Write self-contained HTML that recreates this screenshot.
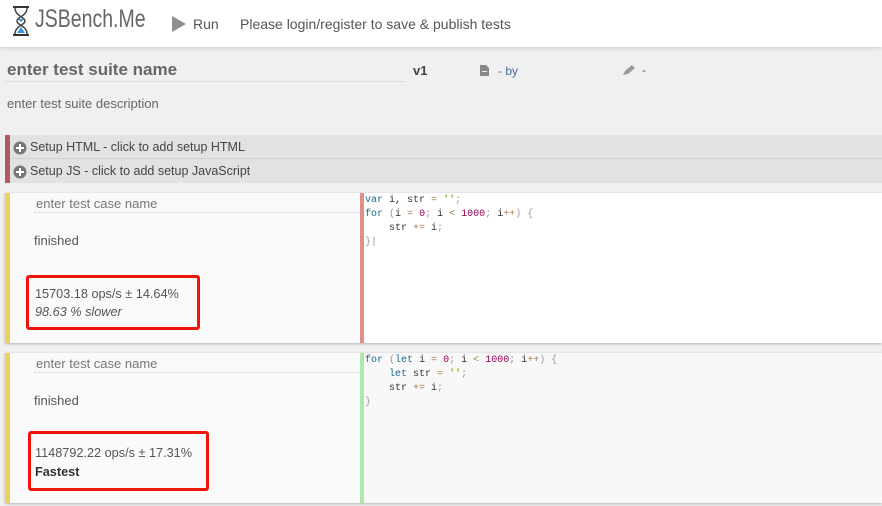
<!DOCTYPE html>
<html><head><meta charset="utf-8"><style>
body{margin:0;width:882px;height:506px;overflow:hidden;background:#f0f0f0;font-family:"Liberation Sans",sans-serif;color:#555;position:relative}
.a{position:absolute}
.hdr{left:0;top:0;width:882px;height:47px;background:#fff;box-shadow:0 1px 4px rgba(0,0,0,.15)}
.code{font-family:"Liberation Mono",monospace;font-size:10px;line-height:14px;white-space:pre;color:#333}
.k{color:#1a6b8f}.n{color:#990055}.o{color:#a67f59}.s{color:#690}.p{color:#999}
.card{left:5px;width:877px;height:150px;background:#fafafa;box-shadow:0 1px 3px rgba(0,0,0,.25)}
.red{border:3px solid #f0150a;border-radius:3px;box-sizing:border-box}
</style></head><body>
<div class="a hdr">
<svg class="a" style="left:10px;top:5px" width="22" height="32" viewBox="0 0 22 32"><path d="M3 2h16M3 30h16" stroke="#333" stroke-width="2"/><path d="M5 3c0 8 10 9 10 13s-10 5-10 13M17 3c0 8-10 9-10 13s10 5 10 13" stroke="#444" fill="none" stroke-width="1.5"/><path d="M8 14l3 3 3-3zM7 28l4-6 4 6z" fill="#3b8fd6"/></svg>
<div class="a" style="left:35px;top:5px;font-size:25px;color:#666;transform:scaleX(.78);transform-origin:0 0">JSBench.Me</div>
<svg class="a" style="left:172px;top:16px" width="14" height="16"><path d="M0 0L14 8L0 16Z" fill="#8a9096"/></svg>
<div class="a" style="left:193px;top:16px;font-size:14px;color:#555">Run</div>
<div class="a" style="left:240px;top:16px;font-size:14px;color:#555">Please login/register to save &amp; publish tests</div>
</div>
<div class="a" style="left:7px;top:60px;font-size:17px;font-weight:bold;color:#666">enter test suite name</div>
<div class="a" style="left:5px;top:81px;width:400px;border-top:1px dotted #ccc"></div>
<div class="a" style="left:413px;top:63px;font-size:13px;font-weight:bold;color:#444">v1</div>
<svg class="a" style="left:480px;top:65px" width="9" height="11"><path d="M0 0h6l3 3v8H0z" fill="#888"/><rect x="2" y="6" width="5" height="1" fill="#eee"/></svg>
<div class="a" style="left:498px;top:64px;font-size:12px;color:#4a6a9a">- by</div>
<svg class="a" style="left:622px;top:65px" width="13" height="11"><path d="M1 10l2-4 7-6 3 3-7 6z" fill="#999"/></svg>
<div class="a" style="left:642px;top:63px;font-size:12px;color:#555">-</div>
<div class="a" style="left:7px;top:96px;font-size:13px;color:#666">enter test suite description</div>
<div class="a" style="left:5px;top:135px;width:877px;height:48px;background:#e2e2e2;border-left:5px solid #b05a66;box-sizing:border-box"></div>
<div class="a" style="left:10px;top:158px;width:872px;border-top:1px solid #cfcfcf"></div>
<svg class="a" style="left:13px;top:141px" width="14" height="14"><circle cx="7" cy="7" r="6.5" fill="#777"/><path d="M7 3v8M3 7h8" stroke="#fff" stroke-width="2"/></svg>
<div class="a" style="left:30px;top:140px;font-size:12.5px;color:#444">Setup HTML - click to add setup HTML</div>
<svg class="a" style="left:13px;top:165px" width="14" height="14"><circle cx="7" cy="7" r="6.5" fill="#777"/><path d="M7 3v8M3 7h8" stroke="#fff" stroke-width="2"/></svg>
<div class="a" style="left:30px;top:164px;font-size:12.5px;color:#444">Setup JS - click to add setup JavaScript</div>

<div class="a card" style="top:193px;border-left:5px solid #eecf5e;box-sizing:border-box"></div>
<div class="a" style="left:36px;top:196px;font-size:13px;color:#777">enter test case name</div>
<div class="a" style="left:34px;top:212px;width:326px;border-top:1px dotted #ccc"></div>
<div class="a" style="left:34px;top:233px;font-size:13px;color:#555">finished</div>
<div class="a red" style="left:26px;top:275px;width:174px;height:55px"></div>
<div class="a" style="left:35px;top:287px;font-size:12.7px;color:#555">15703.18 ops/s ± 14.64%</div>
<div class="a" style="left:35px;top:305px;font-size:12.7px;color:#555;font-style:italic">98.63 % slower</div>
<div class="a" style="left:360px;top:193px;width:522px;height:150px;background:#fff;border-left:4px solid #e08f8b;box-sizing:border-box"></div>
<div class="a code" style="left:365px;top:194px"><span class="k">var</span> i, str <span class="o">=</span> <span class="s">''</span><span class="p">;</span>
<span class="k">for</span> <span class="p">(</span>i <span class="o">=</span> <span class="n">0</span><span class="p">;</span> i <span class="o">&lt;</span> <span class="n">1000</span><span class="p">;</span> i<span class="o">++</span><span class="p">) {</span>
    str <span class="o">+=</span> i<span class="p">;</span>
<span class="p">}|</span></div>

<div class="a card" style="top:353px;border-left:5px solid #eecf5e;box-sizing:border-box"></div>
<div class="a" style="left:36px;top:356px;font-size:13px;color:#777">enter test case name</div>
<div class="a" style="left:34px;top:372px;width:326px;border-top:1px dotted #ccc"></div>
<div class="a" style="left:34px;top:393px;font-size:13px;color:#555">finished</div>
<div class="a red" style="left:28px;top:431px;width:181px;height:60px"></div>
<div class="a" style="left:35px;top:446px;font-size:12.7px;color:#555">1148792.22 ops/s ± 17.31%</div>
<div class="a" style="left:35px;top:465px;font-size:12.7px;color:#333;font-weight:bold">Fastest</div>
<div class="a" style="left:360px;top:353px;width:522px;height:150px;background:#f8f8f8;border-left:4px solid #aee8ad;box-sizing:border-box"></div>
<div class="a code" style="left:365px;top:354px"><span class="k">for</span> <span class="p">(</span><span class="k">let</span> i <span class="o">=</span> <span class="n">0</span><span class="p">;</span> i <span class="o">&lt;</span> <span class="n">1000</span><span class="p">;</span> i<span class="o">++</span><span class="p">) {</span>
    <span class="k">let</span> str <span class="o">=</span> <span class="s">''</span><span class="p">;</span>
    str <span class="o">+=</span> i<span class="p">;</span>
<span class="p">}</span></div>
</body></html>
